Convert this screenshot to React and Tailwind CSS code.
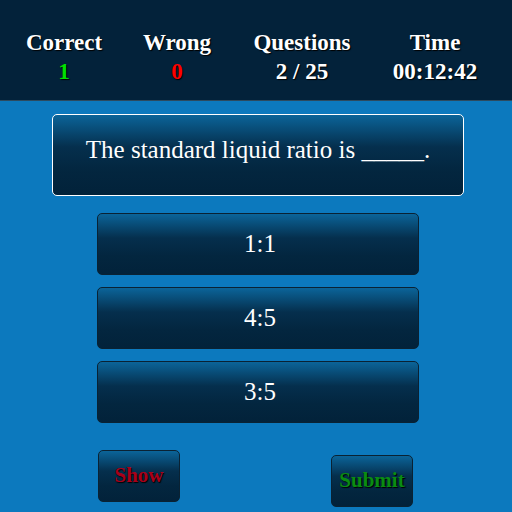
const stats = [
  { label: "Correct", value: "1", color: "text-[#00e000]" },
  { label: "Wrong", value: "0", color: "text-[#ff0000]" },
  { label: "Questions", value: "2 / 25", color: "text-white" },
  { label: "Time", value: "00:12:42", color: "text-white" },
];

const options = ["1:1", "4:5", "3:5"];

const serif = "[font-family:'Liberation_Serif','Times_New_Roman',serif]";
const panel =
  "bg-[linear-gradient(to_bottom,#0b6499_0%,#052f4d_40%,#03263f_70%,#02223a_100%)]";

export default function App() {
  return (
    <div className={`w-[512px] h-[512px] overflow-hidden bg-[#0c79be] ${serif}`}>
      {/* Score header */}
      <div className="h-[101px] bg-[#03223a] border-b border-[#2c4a5f] grid grid-cols-[128px_98px_152px_114px] pt-[28px]">
        {stats.map((s) => (
          <div key={s.label} className="flex flex-col items-center font-bold text-[23px] leading-[29px] [text-shadow:1px_1px_1px_#000]">
            <span className="text-white">{s.label}</span>
            <span className={s.color}>{s.value}</span>
          </div>
        ))}
      </div>

      {/* Question */}
      <div className={`ml-[52px] w-[412px] mt-[13px] h-[82px] rounded-[5px] border border-white ${panel} flex items-center justify-center text-white text-[25px] pb-[10px]`}>
        <p>The standard liquid ratio is _____.</p>
      </div>

      {/* Answers */}
      <div className="mt-[17px] ml-[97px] w-[322px] flex flex-col gap-[12px]">
        {options.map((o) => (
          <button
            key={o}
            className={`h-[62px] rounded-[5px] border border-[#0a2233] ${panel} text-white text-[25px] flex items-center justify-center pl-[4px]`}
          >
            {o}
          </button>
        ))}
      </div>

      {/* Actions */}
      <div className="flex justify-between items-start mt-[27px] ml-[98px] mr-[99px]">
        <button className={`w-[82px] h-[52px] rounded-[5px] border border-[#0a2233] ${panel} text-[#a8001a] font-bold text-[21px] [text-shadow:1px_1px_1px_#000]`}>
          Show
        </button>
        <button className={`mt-[5px] w-[82px] h-[52px] rounded-[5px] border border-[#0a2233] ${panel} text-[#0a8c12] font-bold text-[21px] [text-shadow:1px_1px_1px_#000]`}>
          Submit
        </button>
      </div>
    </div>
  );
}
